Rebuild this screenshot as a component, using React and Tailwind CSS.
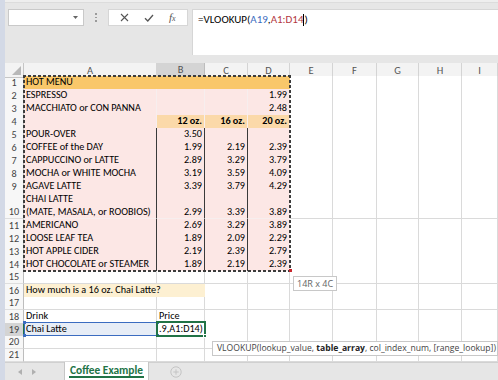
import React from "react";

const COLS = "grid-cols-[19px_133px_48px_43px_42px_43px_44px_42px_43px_1fr]";
const LETTERS = ["A", "B", "C", "D", "E", "F", "G", "H", "I"];

const rows = [
  { n: 1, a: "HOT MENU", fill: "orange" },
  { n: 2, a: "ESPRESSO", d: "1.99", fill: "pink" },
  { n: 3, a: "MACCHIATO or CON PANNA", d: "2.48", fill: "pink" },
  { n: 4, b: "12 oz.", c: "16 oz.", d: "20 oz.", fill: "peach", bold: true },
  { n: 5, a: "POUR-OVER", b: "3.50", fill: "pink", box: true },
  { n: 6, a: "COFFEE of the DAY", b: "1.99", c: "2.19", d: "2.39", fill: "pink", box: true },
  { n: 7, a: "CAPPUCCINO or LATTE", b: "2.89", c: "3.29", d: "3.79", fill: "pink", box: true },
  { n: 8, a: "MOCHA or WHITE MOCHA", b: "3.19", c: "3.59", d: "4.09", fill: "pink", box: true },
  { n: 9, a: "AGAVE LATTE", b: "3.39", c: "3.79", d: "4.29", fill: "pink", box: true },
  { n: 10, a: "CHAI LATTE", a2: "(MATE, MASALA, or ROOBIOS)", b: "2.99", c: "3.39", d: "3.89", fill: "pink", box: true, tall: true },
  { n: 11, a: "AMERICANO", b: "2.69", c: "3.29", d: "3.89", fill: "pink", box: true },
  { n: 12, a: "LOOSE LEAF TEA", b: "1.89", c: "2.09", d: "2.29", fill: "pink", box: true },
  { n: 13, a: "HOT APPLE CIDER", b: "2.19", c: "2.39", d: "2.79", fill: "pink", box: true },
  { n: 14, a: "HOT CHOCOLATE or STEAMER", b: "1.89", c: "2.19", d: "2.39", fill: "pink", box: true },
  { n: 15 },
  { n: 16, a: "How much is a 16 oz. Chai Latte?", fill: "cream" },
  { n: 17 },
  { n: 18, a: "Drink", b: "Price", bLeft: true },
  { n: 19, a: "Chai Latte", b: ".9,A1:D14)", bLeft: true, sel: true },
  { n: 20 },
  { n: 21 },
];

function cellBg(row, col) {
  if (row.fill === "orange" && col <= 3) return "bg-[#f9c76a] border-[#f9c76a]";
  if (row.fill === "pink" && col <= 3) return "bg-[#fce7e5] border-[#f7eeee]";
  if (row.fill === "peach") {
    if (col === 0) return "bg-[#fce7e5] border-[#f7eeee]";
    if (col <= 3) return "bg-[#fbd9a9] border-[#f7eeee]";
  }
  if (row.fill === "cream" && col <= 1) return "bg-[#fdf0d2] border-[#fdf0d2]";
  if (row.sel && col === 0) return "bg-[#e7edf6] border-[#dadada]";
  return "bg-white border-[#dadada]";
}

function Row({ row }) {
  const h = row.tall ? "h-[26px]" : "h-[13px]";
  const vals = [row.a, row.b, row.c, row.d];
  return (
    <div className={`grid ${COLS} ${h}`}>
      <div
        className={`flex items-end justify-center border-r border-b text-[10.2px] leading-[12px] text-[#444] ${
          row.sel ? "bg-[#d4d4d4] border-r-[#217346] border-b-[#c6c6c6]" : "bg-[#f7f7f7] border-r-[#bdbdbd] border-b-[#dedede]"
        }`}
      >
        {row.n}
      </div>
      {LETTERS.map((L, i) => {
        const v = vals[i];
        const isNum = i > 0 && i <= 3 && !row.bLeft;
        const dark = row.box && i <= 2 ? "border-r-[#3a3a3a]" : "";
        return (
          <div
            key={L}
            className={`relative flex flex-col justify-end border-r border-b overflow-visible whitespace-nowrap text-[10.2px] leading-[12.5px] text-black ${cellBg(row, i)} ${dark} ${
              isNum ? "items-end pr-[2px]" : "items-start pl-[2px]"
            } ${row.bold ? "font-bold" : ""} ${i === 0 ? "z-10" : ""}`}
          >
            {row.a2 && i === 0 ? (
              <>
                <span>{row.a}</span>
                <span>{row.a2}</span>
              </>
            ) : (
              <span>{v}</span>
            )}
          </div>
        );
      })}
    </div>
  );
}

function HeaderRow() {
  return (
    <div className={`grid ${COLS} h-[13px]`}>
      <div className="relative border-r border-b border-[#c6c6c6] bg-[#f3f3f3]">
        <div className="absolute right-[2px] bottom-[2px] w-0 h-0 border-l-[9px] border-l-transparent border-b-[9px] border-b-[#b8b8b8]" />
      </div>
      {LETTERS.map((L) => (
        <div
          key={L}
          className={`flex items-center justify-center border-r text-[10.5px] leading-[13px] text-[#555] ${
            L === "B"
              ? "bg-[#d4d4d4] border-r-[#bdbdbd] border-b-2 border-b-[#217346]"
              : "bg-[#f3f3f3] border-r-[#d4d4d4] border-b border-b-[#c6c6c6]"
          }`}
        >
          {L}
        </div>
      ))}
    </div>
  );
}

export default function App() {
  return (
    <div className="flex w-[498px] h-[380px] overflow-hidden bg-[#e6e6e6] font-['Carlito','Lato','Liberation_Sans',sans-serif]">
      <div className="w-[5px] shrink-0 bg-[#d3d9e6]" />
      <div className="flex flex-col flex-1 min-w-0">
        {/* formula bar */}
        <div className="h-[63px] shrink-0 flex flex-col bg-[#e6e6e6]">
          <div className="h-[3px] bg-[#eeeeee] border-b border-[#dcdcdc]" />
          <div className="flex items-start pt-[6px]">
            <div className="ml-[3px] w-[76px] h-[17px] bg-white border border-[#c9c9c9] flex items-center justify-end pr-[5px]">
              <svg width="5" height="3" viewBox="0 0 5 3"><path d="M0 0h5L2.5 3z" fill="#666" /></svg>
            </div>
            <div className="w-[24px] h-[17px] flex flex-col items-center justify-center gap-[2px]">
              <div className="w-[1.5px] h-[1.5px] bg-[#9a9a9a]" />
              <div className="w-[1.5px] h-[1.5px] bg-[#9a9a9a]" />
              <div className="w-[1.5px] h-[1.5px] bg-[#9a9a9a]" />
            </div>
            <div className="w-[80px] h-[17px] bg-white border border-[#d6d6d6] flex items-center justify-around px-[4px]">
              <svg width="9" height="9" viewBox="0 0 9 9"><path d="M1 1l7 7M8 1l-7 7" stroke="#555" strokeWidth="1.1" /></svg>
              <svg width="10" height="8" viewBox="0 0 10 8"><path d="M1 4.2l2.8 2.8L9 1" stroke="#555" strokeWidth="1.3" fill="none" /></svg>
              <span className="font-['Liberation_Serif',serif] italic text-[11px] leading-none text-[#555]">f<span className="text-[8px]">x</span></span>
            </div>
            <div className="ml-[4px] flex-1 h-[46px] bg-white border-l border-t border-[#d6d6d6] pl-[5px] pt-[3px] text-[11px] leading-[14px] text-black whitespace-nowrap">
              =VLOOKUP(<span className="text-[#3b6cc0]">A19</span>,<span className="text-[#b3373f]">A1:D14</span>
              <span className="inline-block w-px h-[12px] bg-black align-middle" />)
            </div>
          </div>
        </div>

        {/* grid */}
        <div className="relative flex-1 flex flex-col bg-white overflow-hidden">
          <HeaderRow />
          {rows.map((r) => (
            <Row key={r.n} row={r} />
          ))}

          {/* dashed range outline A1:D14 */}
          <div className="absolute left-[18px] top-[12px] w-[268px] h-[197px] z-20 pointer-events-none [background:repeating-linear-gradient(90deg,#3c3c3c_0_3px,transparent_3px_5px)_top/100%_2px_no-repeat,repeating-linear-gradient(90deg,#3c3c3c_0_3px,transparent_3px_5px)_bottom/100%_2px_no-repeat,repeating-linear-gradient(180deg,#3c3c3c_0_3px,transparent_3px_5px)_left/2px_100%_no-repeat,repeating-linear-gradient(180deg,#3c3c3c_0_3px,transparent_3px_5px)_right/2px_100%_no-repeat]" />
          <div className="absolute left-[284px] top-[206px] w-[3px] h-[3px] bg-[#c8252c] z-30" />

          {/* A19 reference box */}
          <div className="absolute left-[19px] top-[259px] w-[134px] h-[14px] border border-[#3b6cc0] z-20 pointer-events-none">
            <div className="absolute -left-[2px] -top-[2px] w-[3px] h-[3px] bg-[#3b6cc0]" />
            <div className="absolute -right-[2px] -top-[2px] w-[3px] h-[3px] bg-[#3b6cc0]" />
            <div className="absolute -left-[2px] -bottom-[2px] w-[3px] h-[3px] bg-[#3b6cc0]" />
            <div className="absolute -right-[2px] -bottom-[2px] w-[3px] h-[3px] bg-[#3b6cc0]" />
          </div>
          {/* B19 active cell */}
          <div className="absolute left-[151px] top-[258px] w-[50px] h-[16px] border-2 border-[#217346] z-20 pointer-events-none">
            <div className="absolute -right-[3px] -bottom-[3px] w-[4px] h-[4px] bg-[#217346] border border-white" />
          </div>

          {/* range size tip */}
          <div className="absolute left-[288px] top-[213px] h-[15px] px-[3px] bg-white border border-[#c8c8c8] text-[9px] leading-[13px] text-[#666] font-['Open_Sans',sans-serif] z-30">
            14R x 4C
          </div>

          {/* function tooltip */}
          <div className="absolute left-[207px] top-[278px] w-[286px] h-[15px] pl-[4px] bg-white border border-[#c8c8c8] text-[8.6px] leading-[13px] text-[#444] whitespace-nowrap font-['Open_Sans',sans-serif] z-30">
            VLOOKUP(lookup_value, <span className="font-bold text-[#222]">table_array</span>, col_index_num, [range_lookup])
          </div>
        </div>

        {/* sheet tabs */}
        <div className="h-[18px] shrink-0 flex items-stretch bg-[#e6e6e6] border-t border-[#d0d0d0]">
          <div className="w-[59px] flex items-center gap-[10px] pl-[13px]">
            <svg width="4" height="6" viewBox="0 0 4 6"><path d="M4 0v6L0 3z" fill="#b0b0b0" /></svg>
            <svg width="4" height="6" viewBox="0 0 4 6"><path d="M0 0v6l4-3z" fill="#b0b0b0" /></svg>
          </div>
          <div className="w-[85px] bg-white border-l border-r border-[#c6c6c6] flex flex-col items-center justify-center -mt-px">
            <span className="text-[11.4px] leading-[12px] font-bold text-[#217346] border-b-2 border-[#217346] px-[1px]">Coffee Example</span>
          </div>
          <div className="flex items-center pl-[21px]">
            <svg width="12" height="12" viewBox="0 0 12 12">
              <circle cx="6" cy="6" r="5.2" fill="none" stroke="#c4c4c4" strokeWidth="1" />
              <path d="M6 3.3v5.4M3.3 6h5.4" stroke="#c4c4c4" strokeWidth="1" />
            </svg>
          </div>
        </div>
      </div>
    </div>
  );
}
